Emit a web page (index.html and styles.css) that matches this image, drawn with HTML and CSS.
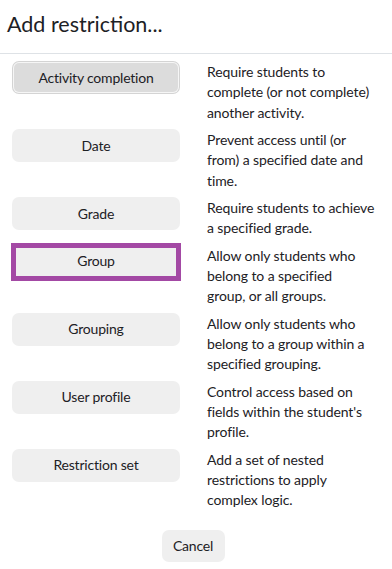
FILE: index.html
```html
<!DOCTYPE html>
<html lang="en">
<head>
<meta charset="utf-8">
<title>Add restriction...</title>
<link rel="stylesheet" href="styles.css">
</head>
<body>
<div class="dialog">
  <div class="header">
    <h1 class="title">Add restriction...</h1>
  </div>
  <div class="body">
    <div class="row">
      <div class="btn-col"><button class="btn btn-focus">Activity completion</button></div>
      <div class="desc">Require students to<br>complete (or not complete)<br>another activity.</div>
    </div>
    <div class="row">
      <div class="btn-col"><button class="btn">Date</button></div>
      <div class="desc">Prevent access until (or<br>from) a specified date and<br>time.</div>
    </div>
    <div class="row">
      <div class="btn-col"><button class="btn">Grade</button></div>
      <div class="desc">Require students to achieve<br>a specified grade.</div>
    </div>
    <div class="row">
      <div class="btn-col"><button class="btn btn-highlight">Group</button></div>
      <div class="desc">Allow only students who<br>belong to a specified<br>group, or all groups.</div>
    </div>
    <div class="row">
      <div class="btn-col"><button class="btn">Grouping</button></div>
      <div class="desc">Allow only students who<br>belong to a group within a<br>specified grouping.</div>
    </div>
    <div class="row">
      <div class="btn-col"><button class="btn">User profile</button></div>
      <div class="desc">Control access based on<br>fields within the student's<br>profile.</div>
    </div>
    <div class="row">
      <div class="btn-col"><button class="btn">Restriction set</button></div>
      <div class="desc">Add a set of nested<br>restrictions to apply<br>complex logic.</div>
    </div>
    <div class="footer">
      <button class="btn btn-cancel">Cancel</button>
    </div>
  </div>
</div>
</body>
</html>
```

FILE: styles.css
```css
html, body {
  margin: 0;
  padding: 0;
  background: #ffffff;
}
body {
  font-family: Lato, "Noto Sans", sans-serif;
  color: #1d2125;
  font-size: 14px;
  letter-spacing: -0.1px;
  line-height: 20.25px;
}
.dialog {
  width: 392px;
}
.header {
  height: 54px;
  border-bottom: 1px solid #dee2e6;
  display: flex;
  align-items: center;
  padding-left: 7px;
  box-sizing: border-box;
}
.title {
  margin: 0;
  font-size: 21.5px;
  font-weight: 400;
  letter-spacing: 0;
  line-height: 28px;
  color: #1d2125;
  position: relative;
  top: -3px;
}
.body {
  padding: 7px 12px 0 12px;
}
.row {
  display: flex;
  gap: 27px;
  margin-bottom: 6.25px;
}
.btn-col {
  flex: 0 0 168px;
}
.desc {
  flex: 1;
  padding-top: 1px;
  white-space: nowrap;
}
.btn {
  font-family: inherit;
  font-size: 14px;
  letter-spacing: -0.2px;
  line-height: 20px;
  color: #1d2125;
  background: #efefef;
  border: none;
  border-radius: 7px;
  padding: 0;
  margin: 0;
  height: 33px;
  width: 168px;
  display: block;
  position: relative;
  cursor: pointer;
}
.btn-focus {
  background: #dcdcdc;
  border-radius: 5px;
  width: 164px;
  height: 29px;
  margin: 2px;
  box-shadow: 0 0 0 1px #f6f6f6, 0 0 0 2px #d4d4d4;
}
.btn-highlight::after {
  content: "";
  position: absolute;
  left: -1px;
  right: -1px;
  top: -2px;
  bottom: -3px;
  border: 5px solid #a349a4;
}
.footer {
  display: flex;
  justify-content: center;
  padding-top: 13px;
  padding-right: 6px;
}
.btn-cancel {
  width: 63px;
  height: 32px;
}
```
